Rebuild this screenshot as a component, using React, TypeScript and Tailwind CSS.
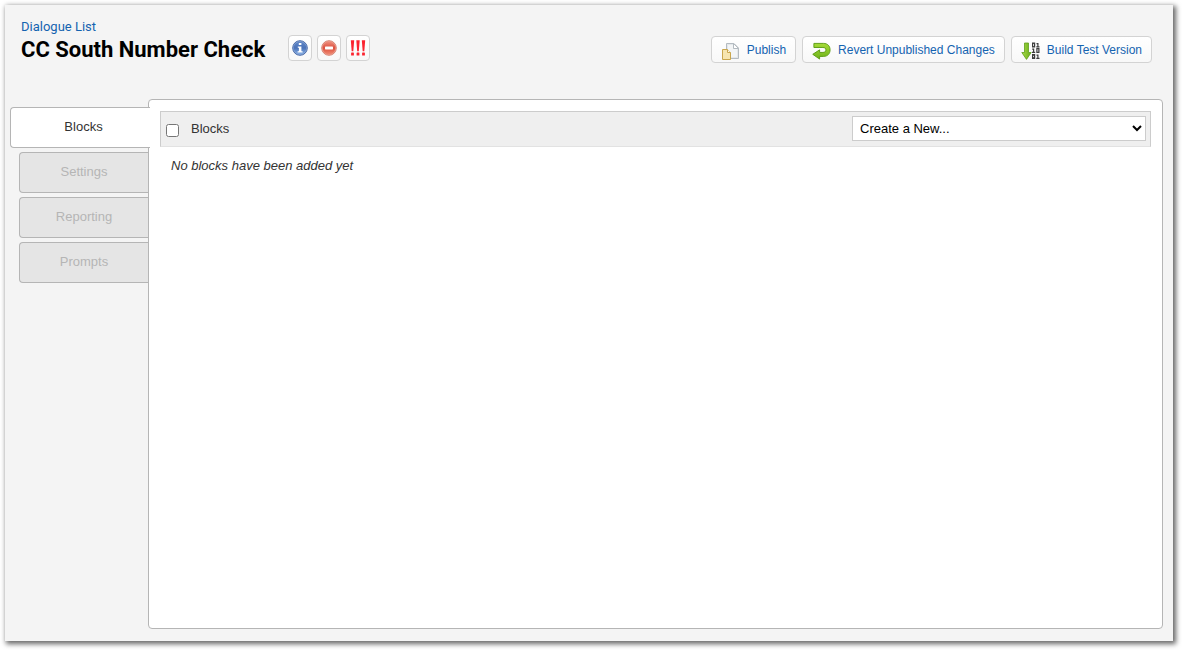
import { useState, type ReactNode } from "react";

function InfoIcon() {
  return (
    <svg viewBox="0 0 16 16" className="size-4" aria-hidden="true">
      <defs>
        <linearGradient id="info-fill" x1="0" y1="0" x2="0" y2="1">
          <stop offset="0" stopColor="#5f87c9" />
          <stop offset="0.5" stopColor="#4a72b8" />
          <stop offset="1" stopColor="#86afe6" />
        </linearGradient>
      </defs>
      <circle cx="8" cy="8" r="7.3" fill="#8fa9d4" stroke="#4a6cab" strokeWidth="1" />
      <circle cx="8" cy="8" r="6.3" fill="url(#info-fill)" />
      <path d="M6.8 3h2.6v2.1H6.8zM5.8 6.4h3.6v4.8h1.2v1.3H5.6v-1.3h1.3V7.7H5.8z" fill="#fff" />
    </svg>
  );
}

function RemoveIcon() {
  return (
    <svg viewBox="0 0 16 16" className="size-4" aria-hidden="true">
      <defs>
        <linearGradient id="remove-fill" x1="0" y1="0" x2="0" y2="1">
          <stop offset="0" stopColor="#ee8d7c" />
          <stop offset="0.5" stopColor="#dc4f3d" />
          <stop offset="1" stopColor="#f08a72" />
        </linearGradient>
      </defs>
      <circle cx="8" cy="8" r="7.3" fill="#eda193" stroke="#d98574" strokeWidth="1" />
      <circle cx="8" cy="8" r="6.4" fill="url(#remove-fill)" />
      <rect x="4" y="6.6" width="8" height="2.8" rx="0.6" fill="#fff" />
    </svg>
  );
}

function AlertIcon() {
  return (
    <svg viewBox="0 0 16 16" className="size-4" aria-hidden="true">
      <g fill="#fb2430">
        {[2.5, 8, 13.5].map((x) => (
          <g key={x} transform={`translate(${x} 0)`}>
            <path d="M-1.7.2h3.4L.8 11.2H-.8z" />
            <rect x="-1.4" y="12.6" width="2.8" height="3" rx="0.4" />
          </g>
        ))}
      </g>
    </svg>
  );
}

function PublishIcon() {
  return (
    <svg viewBox="0 0 19 18" className="h-[18px] w-[19px]" aria-hidden="true">
      <path d="M5.5 1.500H13l4.500 4.500v10.500h-12z" fill="#e4e8eb" stroke="#b4bbc1" />
      <path d="M7 3h5v4h4v8H7z" fill="#f3f5f6" />
      <path d="M12.500 1.500V6.500h5z" fill="#fff" stroke="#b4bbc1" />
      <path d="M1.500 7.500h5l3 3v7h-8z" fill="#f6e5b0" stroke="#c9a64e" />
      <path d="M6.500 7.500v3h3" fill="#fffbe9" stroke="#c9a64e" />
    </svg>
  );
}

function RevertIcon() {
  return (
    <svg viewBox="0 0 20 18" className="h-[18px] w-[19px]" aria-hidden="true">
      <defs>
        <linearGradient id="revert-fill" x1="0" y1="0" x2="0" y2="1">
          <stop offset="0" stopColor="#a5da37" />
          <stop offset="1" stopColor="#6fb31a" />
        </linearGradient>
      </defs>
      <path
        d="M2 1h10c4.300 0 7 2.600 7 6.800s-2.700 6.900-7 6.900H8v2.800L.8 12.500 8 7.800v2.700h3.500c2 0 3.200-.9 3.200-2.600s-1.200-2.600-3.200-2.600H2z"
        fill="url(#revert-fill)"
        stroke="#5c9c14"
        strokeWidth="1"
        strokeLinejoin="round"
      />
    </svg>
  );
}

function BuildIcon() {
  return (
    <svg viewBox="0 0 19 18" className="h-[18px] w-[19px]" aria-hidden="true">
      <defs>
        <linearGradient id="build-fill" x1="0" y1="0" x2="1" y2="0">
          <stop offset="0" stopColor="#a9dc45" />
          <stop offset="1" stopColor="#67ab1a" />
        </linearGradient>
      </defs>
      <path
        d="M3.500 1h4v9.500h2.700L5.500 17.400.8 10.500h2.700z"
        fill="url(#build-fill)"
        stroke="#5f9f1d"
        strokeWidth="0.8"
        strokeLinejoin="round"
      />
      <g fill="none" stroke="#3d3d3d" strokeWidth="1.200">
        <rect x="11.600" y="1.100" width="2" height="3.800" />
        <path d="M15.500 1.600h1.400v3.300M15.300 4.900h3.200" />
        <path d="M11.200 7.100h1.400v3.300M11 10.400h3.200" />
        <rect x="15.900" y="6.600" width="2" height="3.800" />
        <rect x="11.600" y="12.600" width="2" height="3.800" />
        <path d="M15.500 13.100h1.400v3.300M15.300 16.400h3.200" />
      </g>
    </svg>
  );
}

function IconButton({ label, children }: { label: string; children: ReactNode }) {
  return (
    <button
      type="button"
      aria-label={label}
      className="flex h-[26px] w-6 items-center justify-center rounded border border-[#d3d3d3] bg-linear-to-b from-white to-[#f8f8f8]"
    >
      {children}
    </button>
  );
}

function ActionButton({ icon, children }: { icon: ReactNode; children: ReactNode }) {
  return (
    <button
      type="button"
      className="flex h-[27px] items-center gap-[7px] rounded border border-[#d3d3d3] bg-linear-to-b from-white to-[#f8f8f8] px-[9px] text-xs text-[#1463b0]"
    >
      <span className="pt-0.5">{icon}</span>
      {children}
    </button>
  );
}

const tabs = ["Blocks", "Settings", "Reporting", "Prompts"];

export default function App() {
  const [selected, setSelected] = useState("Blocks");

  return (
    <div className="flex min-h-screen bg-white pt-[5px] pr-[9px] pb-[9px] pl-[5px] font-['Liberation_Sans',Arial,sans-serif] text-[13px] text-[#333]">
      <div className="flex grow flex-col bg-[#f4f4f4] pr-2.5 pb-3 pl-[5px] shadow-[2px_2px_5px_1px_rgba(0,0,0,0.6)]">
        <header className="flex h-[94px] items-start justify-between pr-[11px] pl-[11px]">
          <div className="flex pt-3.5">
            <div className="font-[Roboto,sans-serif]">
              <a href="#dialogues" className="block leading-4 text-[#1463b0]">
                Dialogue List
              </a>
              <h1 className="text-[22px] leading-[30px] font-bold text-black">CC South Number Check</h1>
            </div>
            <div className="flex gap-[5px] pt-4 pl-[23px]">
              <IconButton label="Information">
                <InfoIcon />
              </IconButton>
              <IconButton label="Remove">
                <RemoveIcon />
              </IconButton>
              <IconButton label="Alerts">
                <AlertIcon />
              </IconButton>
            </div>
          </div>
          <div className="flex gap-1.5 pt-[31px]">
            <ActionButton icon={<PublishIcon />}>Publish</ActionButton>
            <ActionButton icon={<RevertIcon />}>Revert Unpublished Changes</ActionButton>
            <ActionButton icon={<BuildIcon />}>Build Test Version</ActionButton>
          </div>
        </header>

        <div className="flex grow">
          <nav className="z-10 -mr-0.5 flex w-[140px] flex-col items-end gap-1 pt-2">
            {tabs.map((tab) => (
              <button
                key={tab}
                type="button"
                onClick={() => setSelected(tab)}
                className={
                  tab === selected
                    ? "h-[41px] w-full rounded-l border border-r-0 border-[#b5b5b5] bg-white pb-0.5 pl-1.5 text-[#333]"
                    : "mr-0.5 h-[41px] w-[129px] rounded-l border border-r-0 border-[#b5b5b5] bg-[#e5e5e5] pb-0.5 text-[#b5b5b5]"
                }
              >
                {tab}
              </button>
            ))}
          </nav>

          <main className="grow rounded border border-[#b5b5b5] bg-white p-[11px]">
            <div className="flex h-9 items-start justify-between border border-[#ccc] border-b-[#e2e2e2] bg-[#efefef] pt-1 pr-1 pl-[5px]">
              <label className="flex h-[25px] items-center gap-3">
                <input type="checkbox" className="mt-1 size-[13px]" />
                Blocks
              </label>
              <select
                aria-label="Create a new block"
                className="h-[25px] w-[294px] border border-[#ccc] bg-white pl-[3px] text-[13px] text-black"
              >
                <option>Create a New...</option>
              </select>
            </div>
            <p className="px-[11px] pt-[11px] leading-4 italic">No blocks have been added yet</p>
          </main>
        </div>
      </div>
    </div>
  );
}
